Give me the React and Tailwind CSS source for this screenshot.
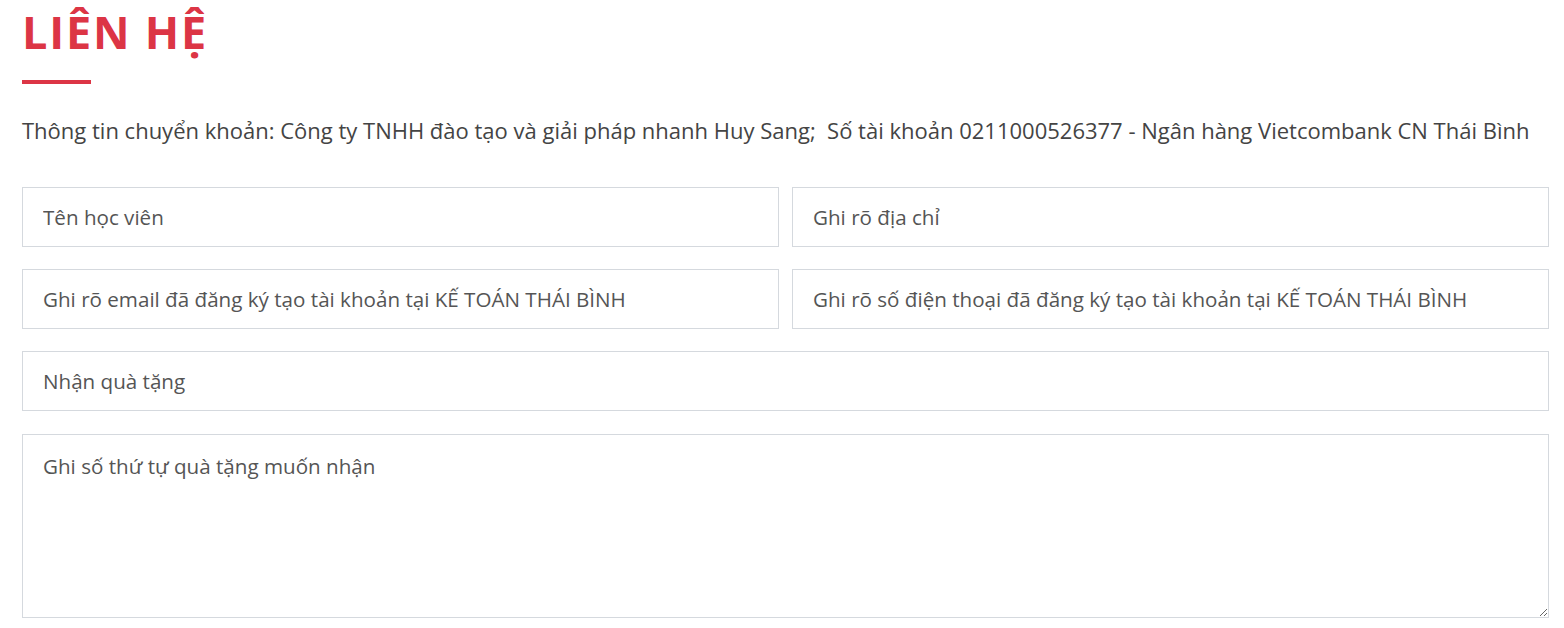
import React from 'react';

const fields = [
  ['Tên học viên', 'Ghi rõ địa chỉ'],
  ['Ghi rõ email đã đăng ký tạo tài khoản tại KẾ TOÁN THÁI BÌNH', 'Ghi rõ số điện thoại đã đăng ký tạo tài khoản tại KẾ TOÁN THÁI BÌNH'],
];

const inputCls =
  "h-[60px] w-full border border-[#d5d9de] bg-white px-5 text-[20.6px] text-[#444] placeholder:text-[#555] outline-none";

const App = () => {
  return (
    <div className="bg-white min-h-screen pl-[22px] pr-[15px] font-['Open_Sans',sans-serif]">
      <h2 className="pt-[6px] text-[45px] leading-[52px] font-bold text-[#dc3545] tracking-[1.8px]">
        LIÊN HỆ
      </h2>
      <div className="mt-[22px] h-[4px] w-[69px] bg-[#dc3545]"></div>
      <p className="mt-[30px] text-[22px] leading-[32px] text-[#444] whitespace-pre">
        Thông tin chuyển khoản: Công ty TNHH đào tạo và giải pháp nhanh Huy Sang;  Số tài khoản 0211000526377 - Ngân hàng Vietcombank CN Thái Bình
      </p>
      <form className="mt-[41px] flex flex-col gap-[22px]">
        {fields.map((row, i) => (
          <div key={i} className="grid grid-cols-2 gap-[13px]">
            {row.map((ph) => (
              <input key={ph} type="text" placeholder={ph} className={inputCls} />
            ))}
          </div>
        ))}
        <input type="text" placeholder="Nhận quà tặng" className={inputCls} />
        <textarea
          placeholder="Ghi số thứ tự quà tặng muốn nhận"
          className="mt-px h-[184px] w-full border border-[#d5d9de] bg-white px-5 pt-[16px] text-[20.6px] leading-[30px] text-[#444] placeholder:text-[#555] outline-none"
        ></textarea>
      </form>
    </div>
  );
};

export default App;
